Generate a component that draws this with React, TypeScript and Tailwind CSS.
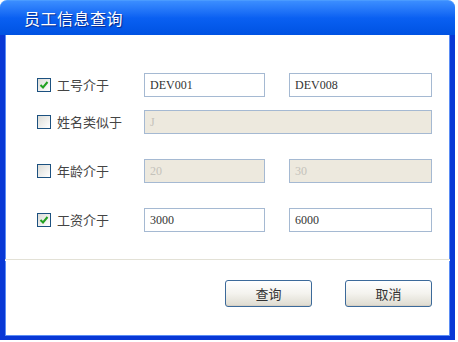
import { useState } from "react";

const cjk = { fontFamily: '"Noto Sans CJK SC", "Noto Sans", sans-serif' };
const serif = { fontFamily: '"Liberation Serif", "DejaVu Serif", serif' };

function Check({ checked, onClick }: { checked: boolean; onClick: () => void }) {
  return (
    <button
      onClick={onClick}
      className="w-[14px] h-[14px] border border-[#1c5180] bg-gradient-to-br from-[#dcdcd7] to-white flex items-center justify-center"
    >
      {checked && (
        <svg width="10" height="10" viewBox="0 0 10 10">
          <path d="M1.5 5 L4 7.5 L8.5 2" fill="none" stroke="#21a121" strokeWidth="2" />
        </svg>
      )}
    </button>
  );
}

function Field({ value, disabled, className = "" }: { value: string; disabled?: boolean; className?: string }) {
  return (
    <div
      style={serif}
      className={`h-[24px] border border-[#a5b9d2] px-[5px] flex items-center text-[12px] ${
        disabled ? "bg-[#ede9de] text-[#c4c2bb]" : "bg-white text-[#333]"
      } ${className}`}
    >
      {value}
    </div>
  );
}

export default function App() {
  const [rows, setRows] = useState([true, false, false, true]);
  const toggle = (i: number) => setRows(rows.map((r, j) => (j === i ? !r : r)));

  const Label = ({ i, text }: { i: number; text: string }) => (
    <div className="w-[107px] flex items-center gap-[6px]">
      <Check checked={rows[i]} onClick={() => toggle(i)} />
      <span style={cjk} className="text-[13px] text-[#444]">
        {text}
      </span>
    </div>
  );

  return (
    <div className="w-[458px] h-[342px] bg-white">
      <div className="w-[455px] h-[340px] flex flex-col">
        {/* Title bar */}
        <div className="h-[35px] rounded-t-[7px] bg-gradient-to-b from-[#3b8dff] via-[#0a60f2] to-[#0052e2] border-t border-[#4a9bff] flex items-center pl-[24px]">
          <span style={cjk} className="text-white text-[16px] tracking-[0.5px] [text-shadow:1px_1px_1px_#0a2a8a]">
            员工信息查询
          </span>
        </div>

        {/* Body */}
        <div className="flex-1 bg-white border-x-[5px] border-b-[4px] border-[#0838d6] shadow-[inset_1px_0_0_#5b8df5,inset_-1px_0_0_#5b8df5,inset_0_-1px_0_#5b8df5] flex flex-col">
          <div className="pl-[32px] pt-[38px] flex items-center">
            <Label i={0} text="工号介于" />
            <Field value="DEV001" className="w-[121px]" />
            <Field value="DEV008" className="w-[143px] ml-[24px]" />
          </div>
          <div className="pl-[32px] pt-[13px] flex items-center">
            <Label i={1} text="姓名类似于" />
            <Field value="J" disabled className="w-[288px]" />
          </div>
          <div className="pl-[32px] pt-[25px] flex items-center">
            <Label i={2} text="年龄介于" />
            <Field value="20" disabled className="w-[121px]" />
            <Field value="30" disabled className="w-[143px] ml-[24px]" />
          </div>
          <div className="pl-[32px] pt-[25px] flex items-center">
            <Label i={3} text="工资介于" />
            <Field value="3000" className="w-[121px]" />
            <Field value="6000" className="w-[143px] ml-[24px]" />
          </div>

          <div className="mt-[27px] h-[2px] bg-[#e3e1d6] border-b border-white" />

          <div className="flex justify-end gap-[33px] pr-[18px] pt-[19px]">
            {["查询", "取消"].map((t) => (
              <button
                key={t}
                style={cjk}
                className="w-[87px] h-[27px] rounded-[3px] border border-[#3c6a9a] bg-gradient-to-b from-white via-[#f4f3ee] to-[#dedbd0] text-[13px] text-[#333] shadow-[inset_0_-1px_0_#d6d0c5]"
              >
                {t}
              </button>
            ))}
          </div>
        </div>
      </div>
    </div>
  );
}
